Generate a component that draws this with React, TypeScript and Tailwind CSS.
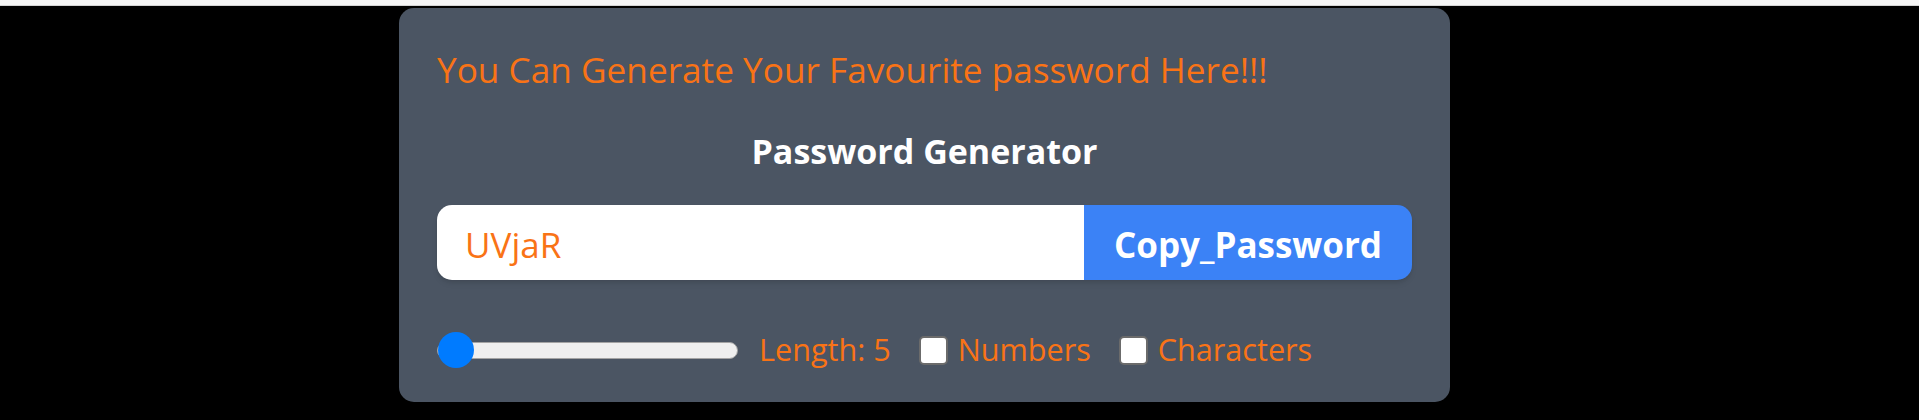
import { useState, useCallback } from 'react'

const font = { fontFamily: '"Open Sans", "Noto Sans", sans-serif' }

export default function App() {
  const [length, setLength] = useState(5)
  const [numbers, setNumbers] = useState(false)
  const [characters, setCharacters] = useState(false)
  const [password, setPassword] = useState('UVjaR')

  const generate = useCallback((len: number, num: boolean, chars: boolean) => {
    let str = 'ABCDEFGHIJKLMNOPQRSTUVWXYZabcdefghijklmnopqrstuvwxyz'
    if (num) str += '0123456789'
    if (chars) str += '!@#$%^&*-_+=[]{}~`'
    let pass = ''
    for (let i = 0; i < len; i++) {
      pass += str.charAt(Math.floor(Math.random() * str.length))
    }
    setPassword(pass)
  }, [])

  const copyPassword = () => {
    navigator.clipboard?.writeText(password).catch(() => {})
  }

  return (
    <div className="min-h-[420px] bg-black" style={font}>
      <div className="h-[6px] bg-[#f5f5f5] border-b border-[#d4d4d4]" />
      <div className="pt-[2px] pl-[399px]">
        <div className="w-[1051px] h-[394px] rounded-[15px] bg-[#4b5563] px-[38px] pt-[39px] flex flex-col">
          <h2 className="text-[35.2px] leading-[44px] text-[#f97316]">
            You Can Generate Your Favourite password Here!!!
          </h2>
          <h1 className="mt-[38px] text-center text-[34px] leading-[44px] font-bold text-white">Password Generator</h1>

          <div className="mt-[32px] flex h-[75px] rounded-[15px] overflow-hidden shadow-md">
            <input
              type="text"
              value={password}
              readOnly
              placeholder="Password"
              className="flex-1 bg-white pl-[28px] pt-[6px] text-[35px] text-[#f97316] outline-none"
            />
            <button
              onClick={copyPassword}
              className="w-[328px] shrink-0 bg-[#3b82f6] pt-[6px] text-[35px] font-bold text-white"
            >
              Copy_Password
            </button>
          </div>

          <div className="mt-[52px] flex items-center h-[36px] text-[30.6px] text-[#f97316]">
            <input
              type="range"
              min={5}
              max={50}
              value={length}
              onChange={(e) => {
                const v = Number(e.target.value)
                setLength(v)
                generate(v, numbers, characters)
              }}
              className="appearance-none w-[301px] h-[17px] rounded-full bg-[#efefef] border border-[#a3a3a3] cursor-pointer [&::-webkit-slider-thumb]:appearance-none [&::-webkit-slider-thumb]:w-[36px] [&::-webkit-slider-thumb]:h-[36px] [&::-webkit-slider-thumb]:rounded-full [&::-webkit-slider-thumb]:bg-[#007bff]"
            />
            <label className="ml-[21px]">Length: {length}</label>

            <input
              type="checkbox"
              id="numberInput"
              checked={numbers}
              onChange={() => {
                setNumbers(!numbers)
                generate(length, !numbers, characters)
              }}
              className="ml-[28px] appearance-none w-[29px] h-[29px] rounded-[5px] bg-white border-2 border-[#6b6b6b] checked:bg-[#007bff] checked:border-[#007bff]"
            />
            <label htmlFor="numberInput" className="ml-[10px]">Numbers</label>

            <input
              type="checkbox"
              id="charInput"
              checked={characters}
              onChange={() => {
                setCharacters(!characters)
                generate(length, numbers, !characters)
              }}
              className="ml-[28px] appearance-none w-[29px] h-[29px] rounded-[5px] bg-white border-2 border-[#6b6b6b] checked:bg-[#007bff] checked:border-[#007bff]"
            />
            <label htmlFor="charInput" className="ml-[10px]">Characters</label>
          </div>
        </div>
      </div>
    </div>
  )
}
